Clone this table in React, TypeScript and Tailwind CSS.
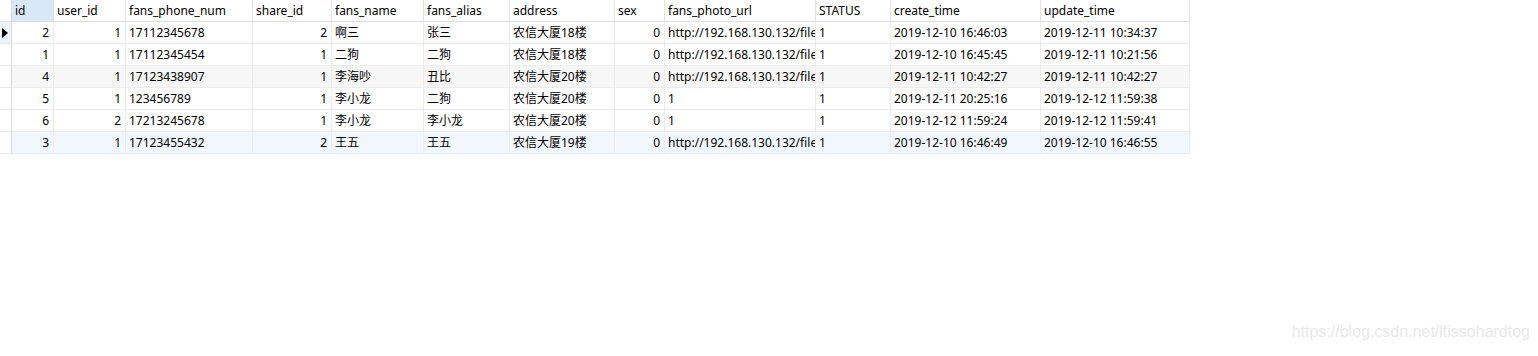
import React from "react";

const cols = [
  { key: "id", label: "id", align: "right" },
  { key: "user_id", label: "user_id", align: "right" },
  { key: "phone", label: "fans_phone_num", align: "left" },
  { key: "share_id", label: "share_id", align: "right" },
  { key: "name", label: "fans_name", align: "left" },
  { key: "alias", label: "fans_alias", align: "left" },
  { key: "address", label: "address", align: "left" },
  { key: "sex", label: "sex", align: "right" },
  { key: "photo", label: "fans_photo_url", align: "left" },
  { key: "status", label: "STATUS", align: "left" },
  { key: "create", label: "create_time", align: "left" },
  { key: "update", label: "update_time", align: "left" },
] as const;

const url = "http://192.168.130.132/file";

const rows: Record<string, string>[] = [
  { id: "2", user_id: "1", phone: "17112345678", share_id: "2", name: "啊三", alias: "张三", address: "农信大厦18楼", sex: "0", photo: url, status: "1", create: "2019-12-10 16:46:03", update: "2019-12-11 10:34:37" },
  { id: "1", user_id: "1", phone: "17112345454", share_id: "1", name: "二狗", alias: "二狗", address: "农信大厦18楼", sex: "0", photo: url, status: "1", create: "2019-12-10 16:45:45", update: "2019-12-11 10:21:56" },
  { id: "4", user_id: "1", phone: "17123438907", share_id: "1", name: "李海吵", alias: "丑比", address: "农信大厦20楼", sex: "0", photo: url, status: "1", create: "2019-12-11 10:42:27", update: "2019-12-11 10:42:27" },
  { id: "5", user_id: "1", phone: "123456789", share_id: "1", name: "李小龙", alias: "二狗", address: "农信大厦20楼", sex: "0", photo: "1", status: "1", create: "2019-12-11 20:25:16", update: "2019-12-12 11:59:38" },
  { id: "6", user_id: "2", phone: "17213245678", share_id: "1", name: "李小龙", alias: "李小龙", address: "农信大厦20楼", sex: "0", photo: "1", status: "1", create: "2019-12-12 11:59:24", update: "2019-12-12 11:59:41" },
  { id: "3", user_id: "1", phone: "17123455432", share_id: "2", name: "王五", alias: "王五", address: "农信大厦19楼", sex: "0", photo: url, status: "1", create: "2019-12-10 16:46:49", update: "2019-12-10 16:46:55" },
];

const rowBg = ["bg-white", "bg-white", "bg-[#f7f7f7]", "bg-white", "bg-white", "bg-[#f1f7fd]"];

export default function App() {
  return (
    <div
      className="relative w-[1538px] h-[356px] bg-white overflow-hidden text-[12px] text-black"
      style={{ fontFamily: '"Noto Sans", "Noto Sans CJK SC", sans-serif' }}
    >
      <div className="grid w-[1190px] grid-cols-[12px_42px_72px_127px_79px_92px_86px_105px_50px_151px_75px_150px_149px]">
        {/* header */}
        <div className="h-[22px] border-r border-b border-r-[#d8d8d8] border-b-[#dedede] bg-white" />
        {cols.map((c, i) => (
          <div
            key={c.key}
            className={`h-[22px] border-r border-b border-r-[#e2e2e2] border-b-[#dedede] flex items-center pl-[3px] pr-[4px] whitespace-nowrap overflow-hidden ${
              i === 0 ? "bg-[#d9e8f7]" : "bg-white"
            }`}
          >
            {c.label}
          </div>
        ))}
        {/* rows */}
        {rows.map((r, ri) => (
          <React.Fragment key={ri}>
            <div
              className={`h-[22px] border-r border-b border-r-[#d8d8d8] border-b-[#e8e8e8] flex items-center justify-center ${
                ri === 0 ? "bg-[#eef4fb]" : "bg-white"
              }`}
            >
              {ri === 0 && (
                <svg width="6" height="10" viewBox="0 0 6 10" className="ml-[-1px]">
                  <path d="M0 0 L6 5 L0 10 Z" fill="#000" />
                </svg>
              )}
            </div>
            {cols.map((c) => (
              <div
                key={c.key}
                className={`h-[22px] border-r border-b border-[#ececec] flex items-center pl-[3px] ${
                  c.key === "photo" ? "pr-0" : "pr-[4px]"
                } whitespace-nowrap overflow-hidden ${rowBg[ri]} ${
                  c.align === "right" ? "justify-end" : "justify-start"
                }`}
              >
                {r[c.key]}
              </div>
            ))}
          </React.Fragment>
        ))}
      </div>
      <div
        className="absolute right-[8px] bottom-[12px] text-[16px] text-[#e9e9e9] whitespace-nowrap"
        style={{ fontFamily: '"Liberation Sans", Arial, sans-serif' }}
      >
        https://blog.csdn.net/ltissohardtog
      </div>
    </div>
  );
}
